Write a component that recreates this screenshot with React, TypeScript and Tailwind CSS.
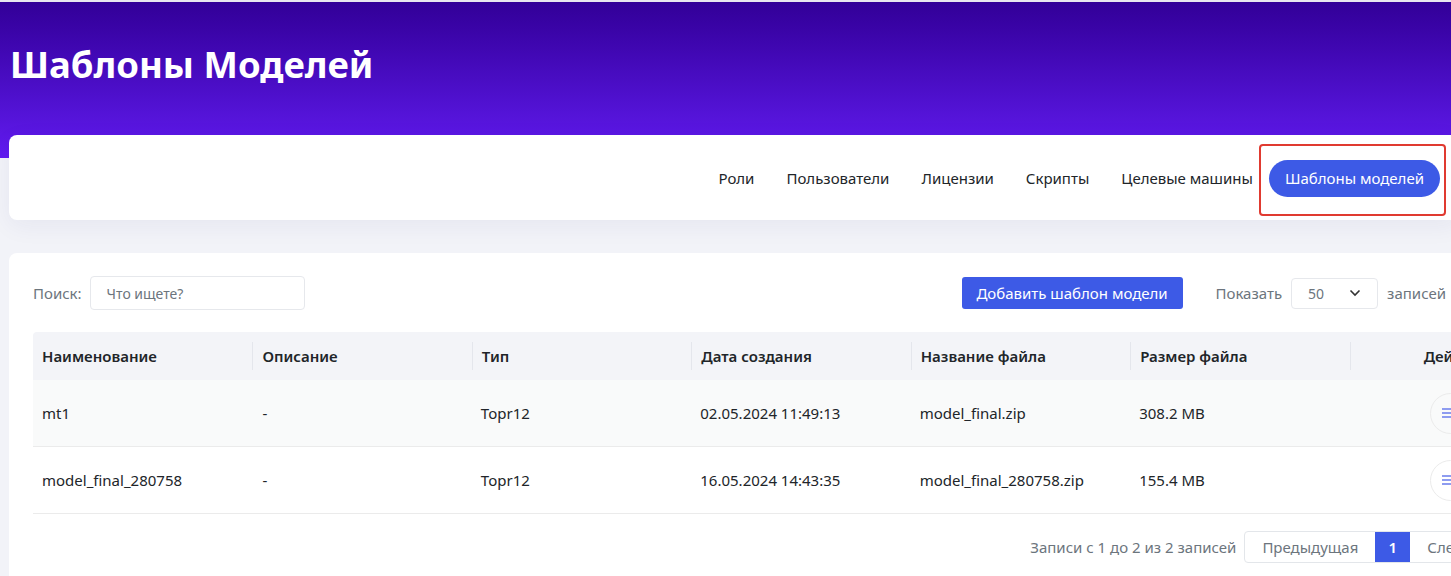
import React from "react";

const rows = [
  { name: "mt1", desc: "-", type: "Topr12", date: "02.05.2024 11:49:13", file: "model_final.zip", size: "308.2 MB", bg: "bg-[#f9fafa]" },
  { name: "model_final_280758", desc: "-", type: "Topr12", date: "16.05.2024 14:43:35", file: "model_final_280758.zip", size: "155.4 MB", bg: "bg-white" },
];

const headers = ["Наименование", "Описание", "Тип", "Дата создания", "Название файла", "Размер файла"];

function BarsIcon() {
  return (
    <svg width="16" height="12" viewBox="0 0 16 12" className="text-[#8e9cf0]">
      <rect x="0" y="1" width="16" height="2" fill="currentColor" />
      <rect x="0" y="5" width="16" height="2" fill="currentColor" />
      <rect x="0" y="9" width="16" height="2" fill="currentColor" />
    </svg>
  );
}

export default function App() {
  return (
    <div className="w-[1451px] h-[576px] overflow-hidden bg-[#f2f3f8] text-[#212529]" style={{ fontFamily: '"Noto Sans", "Open Sans", sans-serif' }}>
      <div className="w-[1600px]">
        {/* Header */}
        <div className="h-[158px] bg-gradient-to-b from-[#320098] to-[#621bf1] border-t-2 border-[#e8e6f0] pl-[10px] pt-[38px]">
          <h1 className="text-white text-[36.5px] font-bold leading-[48px]">Шаблоны Моделей</h1>
        </div>

        {/* Nav card */}
        <div className="relative -mt-[23px] ml-[9px] w-[1451px] h-[85px] bg-white rounded-lg shadow-[0_6px_24px_rgba(40,40,120,0.06)] flex items-center justify-end pr-[20px] text-[15px]">
          <div className="flex items-center mt-[2px]">
            <span className="px-4 py-2">Роли</span>
            <span className="px-4 py-2">Пользователи</span>
            <span className="px-4 py-2">Лицензии</span>
            <span className="px-4 py-2">Скрипты</span>
            <span className="px-4 py-2">Целевые машины</span>
            <span className="relative px-4 h-[37px] flex items-center rounded-full bg-[#3d5ae6] text-white">
              Шаблоны моделей
              <span className="absolute -left-[10px] -right-[6px] -top-[16px] -bottom-[19px] border-2 border-[#e03a30] rounded-[4px]" />
            </span>
          </div>
        </div>

        {/* Main card */}
        <div className="mt-[33px] ml-[9px] w-[1584px] bg-white rounded-lg pt-[23px] pl-[24px] pb-[20px]">
          {/* Toolbar */}
          <div className="flex items-center w-[1413px] text-[15px]">
            <span className="text-[#6c757d] mr-[8px]">Поиск:</span>
            <div className="w-[215px] h-[34px] border border-[#e6e8ec] rounded-[4px] flex items-center pl-[16px] text-[#6c757d] text-[14px]">Что ищете?</div>
            <div className="ml-auto flex items-center">
              <button className="h-[32px] w-[221px] bg-[#3d5ae6] text-white rounded-[3px] text-[15px]">Добавить шаблон модели</button>
              <span className="ml-[33px] text-[#6c757d]">Показать</span>
              <div className="ml-[9px] w-[87px] h-[31px] border border-[#e6e8ec] rounded-[4px] flex items-center justify-between pl-[16px] pr-[16px] text-[14px] text-[#6c757d]">
                <span>50</span>
                <svg width="12" height="8" viewBox="0 0 12 8" fill="none"><path d="M1.5 1.5L6 6l4.5-4.5" stroke="#333" strokeWidth="1.6" /></svg>
              </div>
              <span className="ml-[9px] text-[#6c757d]">записей</span>
            </div>
          </div>

          {/* Table */}
          <div className="mt-[22px] w-[1536px] text-[15px]">
            <div className="grid grid-cols-7 h-[48px] bg-[#f3f4f8] rounded-t-[4px] font-semibold items-center">
              {headers.map((h, i) => (
                <div key={h} className={`h-[28px] flex items-center pl-[9px] ${i > 0 ? "border-l border-[#e4e6ec]" : ""}`}>{h}</div>
              ))}
              <div className="h-[28px] flex items-center justify-center border-l border-[#e4e6ec]">Действия</div>
            </div>
            {rows.map((r) => (
              <div key={r.name} className={`grid grid-cols-7 h-[67px] items-center border-b border-[#ebebeb] ${r.bg}`}>
                <div className="pl-[9px]">{r.name}</div>
                <div className="pl-[10px]">{r.desc}</div>
                <div className="pl-[9px]">{r.type}</div>
                <div className="pl-[9px]">{r.date}</div>
                <div className="pl-[9px]">{r.file}</div>
                <div className="pl-[9px]">{r.size}</div>
                <div className="pl-[80px]">
                  <div className="w-[41px] h-[41px] rounded-full border border-[#ebebeb] flex items-center justify-center">
                    <BarsIcon />
                  </div>
                </div>
              </div>
            ))}
          </div>

          {/* Footer */}
          <div className="mt-[17px] w-[1498px] flex items-center justify-end text-[15px]">
            <span className="text-[#6c757d] mr-[8px]">Записи с 1 до 2 из 2 записей</span>
            <div className="flex h-[32px] border border-[#e3e6ea] rounded-[4px]">
              <span className="px-[17px] flex items-center text-[#6c757d]">Предыдущая</span>
              <span className="w-[35px] flex items-center justify-center bg-[#3d5ae6] text-white font-semibold">1</span>
              <span className="px-[17px] flex items-center text-[#6c757d]">Следующая</span>
            </div>
          </div>
        </div>
      </div>
    </div>
  );
}
